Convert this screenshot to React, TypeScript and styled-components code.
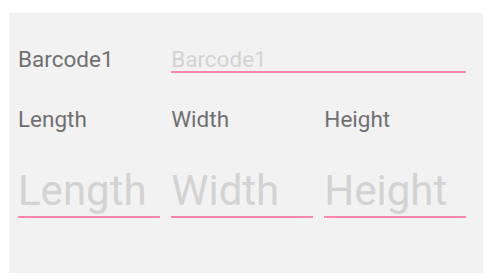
import React from "react";
import styled, { createGlobalStyle } from "styled-components";

const GlobalStyle = createGlobalStyle`
  html, body {
    margin: 0;
    padding: 0;
    background: #ffffff;
  }
  body {
    font-family: Roboto, "Noto Sans", sans-serif;
  }
`;

const Page = styled.div`
  padding: 13px 10px 6px 9px;
`;

const Panel = styled.div`
  width: 474px;
  height: 260px;
  box-sizing: border-box;
  background: #f2f2f2;
  padding: 34px 17px 0 9px;
  display: flex;
  flex-direction: column;
`;

const Row = styled.div<{ $gap: number }>`
  display: grid;
  grid-template-columns: repeat(3, 1fr);
  column-gap: 11.5px;
  margin-bottom: ${(p) => p.$gap}px;
`;

const Label = styled.div`
  font-size: 22.5px;
  line-height: 24px;
  height: 24px;
  color: #707070;
  white-space: nowrap;
`;

const Field = styled.input<{ $big?: boolean; $span?: number }>`
  grid-column: span ${(p) => p.$span ?? 1};
  min-width: 0;
  box-sizing: border-box;
  margin: 0;
  padding: 0 0 ${(p) => (p.$big ? 3 : 0)}px 0;
  border: none;
  border-bottom: 2px solid #ff86ad;
  background: transparent;
  outline: none;
  font-family: Roboto, "Noto Sans", sans-serif;
  font-size: ${(p) => (p.$big ? 42 : 22.5)}px;
  line-height: ${(p) => (p.$big ? 46 : 24)}px;
  height: ${(p) => (p.$big ? 51 : 26)}px;
  color: #333333;

  &::placeholder {
    color: #d3d3d3;
    opacity: 1;
  }
`;

export default function App() {
  return (
    <>
      <GlobalStyle />
      <Page>
        <Panel>
          <Row $gap={34}>
            <Label>Barcode1</Label>
            <Field $span={2} placeholder="Barcode1" />
          </Row>
          <Row $gap={36}>
            <Label>Length</Label>
            <Label>Width</Label>
            <Label>Height</Label>
          </Row>
          <Row $gap={0}>
            <Field $big placeholder="Length" />
            <Field $big placeholder="Width" />
            <Field $big placeholder="Height" />
          </Row>
        </Panel>
      </Page>
    </>
  );
}
